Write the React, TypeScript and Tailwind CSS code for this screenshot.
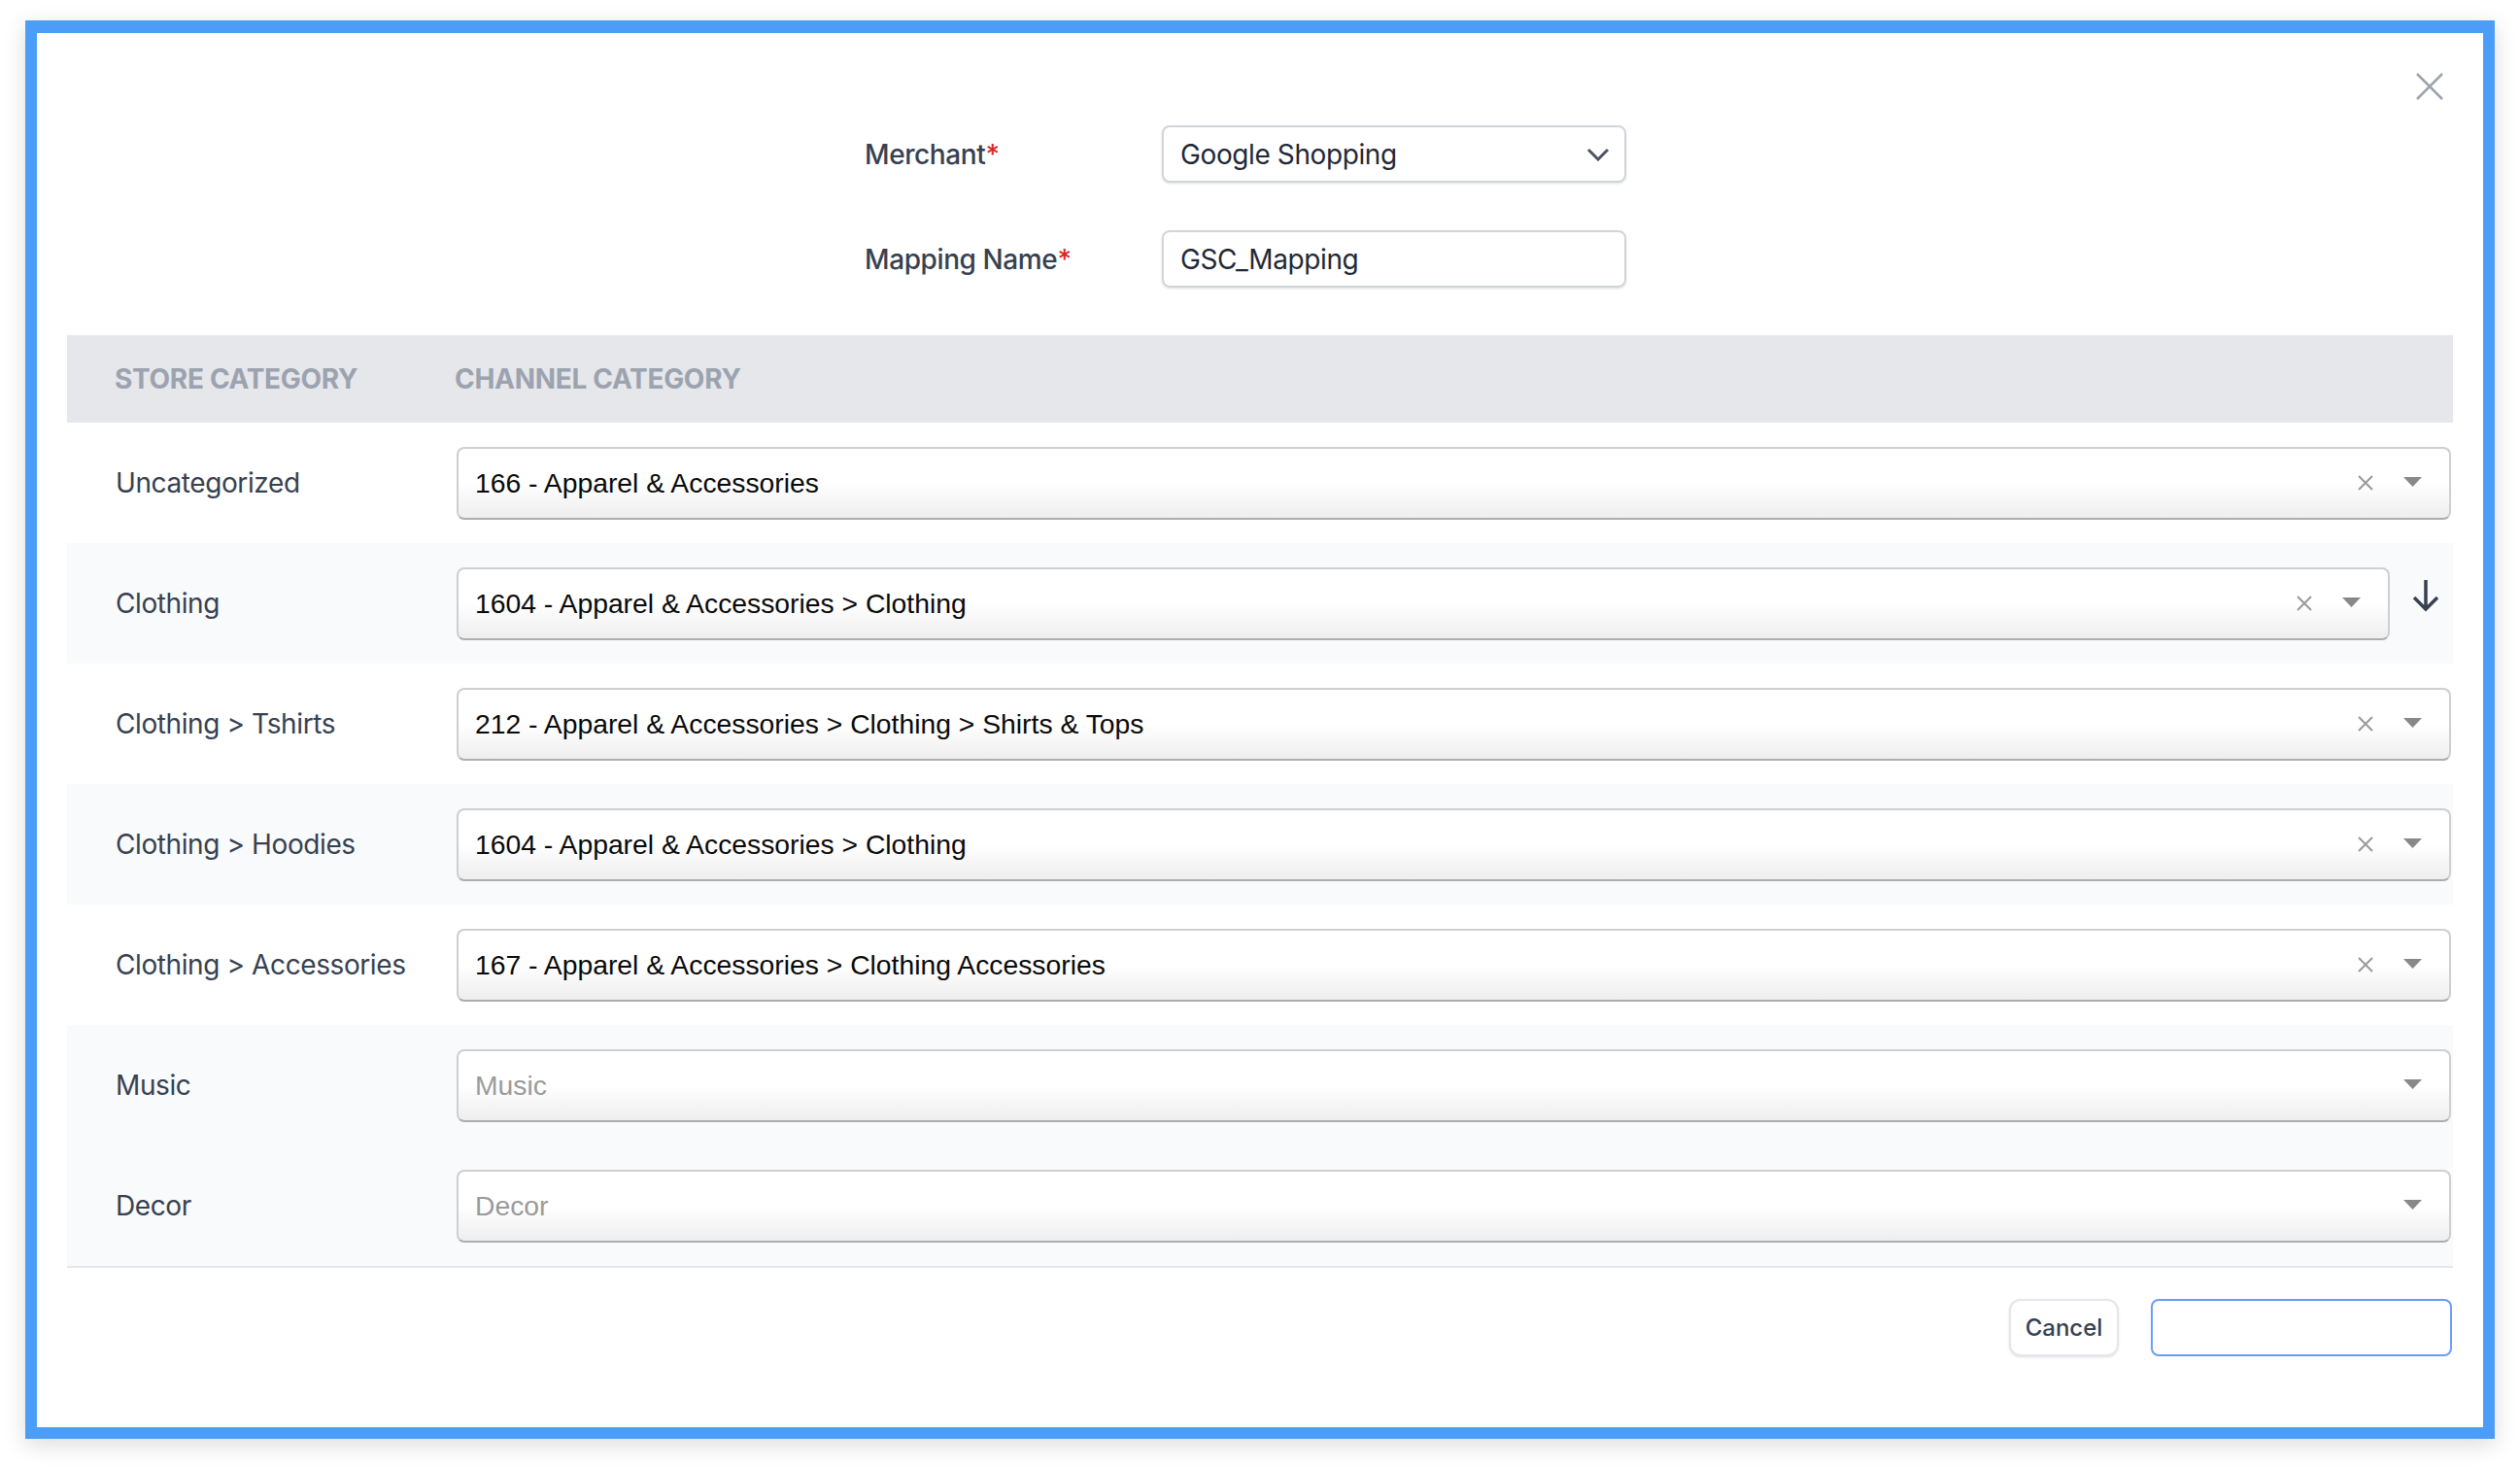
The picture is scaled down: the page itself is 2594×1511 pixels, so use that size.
import React from "react";

type Row = { store: string; channel?: string; placeholder?: string; shaded: boolean; pin?: boolean };

const rows: Row[] = [
  { store: "Uncategorized", channel: "166 - Apparel & Accessories", shaded: false },
  { store: "Clothing", channel: "1604 - Apparel & Accessories > Clothing", shaded: true, pin: true },
  { store: "Clothing > Tshirts", channel: "212 - Apparel & Accessories > Clothing > Shirts & Tops", shaded: false },
  { store: "Clothing > Hoodies", channel: "1604 - Apparel & Accessories > Clothing", shaded: true },
  { store: "Clothing > Accessories", channel: "167 - Apparel & Accessories > Clothing Accessories", shaded: false },
  { store: "Music", placeholder: "Music", shaded: true },
  { store: "Decor", placeholder: "Decor", shaded: true },
];

const ClearIcon = () => (
  <svg width="16" height="16" viewBox="0 0 16 16" className="shrink-0">
    <path d="M1 1L15 15M15 1L1 15" stroke="#999" strokeWidth="2" />
  </svg>
);

const Caret = () => (
  <svg width="19" height="10" viewBox="0 0 19 10" className="shrink-0 -mt-[3px]">
    <polygon points="0,0 19,0 9.5,10" fill="#888" />
  </svg>
);

const ChannelSelect = ({ value, placeholder }: { value?: string; placeholder?: string }) => (
  <div className="flex-1 h-[75px] flex items-center pl-[17px] pr-[28px] rounded-[8px] border-2 border-[#cfcfcf] border-b-[#adadad] bg-gradient-to-b from-white from-50% to-[#eeeeee] font-['Liberation_Sans',Arial,sans-serif] text-[28.3px]">
    {value ? (
      <span className="flex-1 text-[#0a0a0a]">{value}</span>
    ) : (
      <span className="flex-1 text-[#9a9a9a]">{placeholder}</span>
    )}
    {value && (
      <span className="mr-[31px]">
        <ClearIcon />
      </span>
    )}
    <Caret />
  </div>
);

const App = () => {
  return (
    <div className="w-[2594px] h-[1511px] bg-white pl-[26px] pt-[21px] font-['Inter',sans-serif]">
      <div className="relative w-[2542px] h-[1460px] border-[12px] border-t-[13px] border-[#4b9df8] bg-white shadow-[0_6px_22px_rgba(0,0,0,0.14)]">
        <button className="absolute right-[41px] top-[41px]">
          <svg width="28" height="28" viewBox="0 0 28 28">
            <path d="M1 1L27 27M27 1L1 27" stroke="#9ca3af" strokeWidth="2.5" />
          </svg>
        </button>

        <div className="pt-[95px] pl-[852px] flex flex-col gap-[49px]">
          <div className="flex items-center">
            <div className="w-[306px] text-[28px] font-medium tracking-[-0.4px] text-[#374151]">
              Merchant<span className="text-[#dc2626]">*</span>
            </div>
            <div className="w-[478px] h-[59px] flex items-center justify-between pl-[17px] pr-[15px] rounded-[8px] border-2 border-[#d1d5db] shadow-sm text-[28px] tracking-[-0.4px] text-[#1f2937]">
              <span>Google Shopping</span>
              <svg width="24" height="14" viewBox="0 0 24 14">
                <path d="M2 2L12 12L22 2" fill="none" stroke="#4b5563" strokeWidth="3" />
              </svg>
            </div>
          </div>
          <div className="flex items-center">
            <div className="w-[306px] text-[28px] font-medium tracking-[-0.4px] text-[#374151]">
              Mapping Name<span className="text-[#dc2626]">*</span>
            </div>
            <div className="w-[478px] h-[59px] flex items-center pl-[17px] rounded-[8px] border-2 border-[#d1d5db] shadow-sm text-[28px] tracking-[-0.4px] text-[#1f2937]">
              GSC_Mapping
            </div>
          </div>
        </div>

        <div className="mx-[31px] mt-[49px]">
          <div className="h-[90px] flex items-center bg-[#e5e7eb] text-[28px] font-bold uppercase tracking-[-0.3px] text-[#9ca3af]">
            <div className="w-[399px] pl-[49px]">Store Category</div>
            <div>Channel Category</div>
          </div>
          <div className="border-b-2 border-[#e5e7eb]">
            {rows.map((r) => (
              <div
                key={r.store}
                className={`h-[124px] flex items-center ${r.shaded ? "bg-[#f9fafb]" : "bg-white"}`}
              >
                <div className="w-[401px] pl-[50px] text-[28px] tracking-[-0.4px] text-[#374151]">{r.store}</div>
                <div className="flex-1 flex items-center pr-[2px]">
                  <ChannelSelect value={r.channel} placeholder={r.placeholder} />
                  {r.pin && (
                    <div className="w-[63px] pl-[22px] -mt-[16px]">
                      <svg width="30" height="34" viewBox="0 0 30 34">
                        <path d="M15 1V31M3 19L15 31L27 19" fill="none" stroke="#374151" strokeWidth="3.5" />
                      </svg>
                    </div>
                  )}
                </div>
              </div>
            ))}
          </div>
          <div className="flex justify-end items-center gap-[33px] pt-[32px] pr-[1px]">
            <button className="w-[113px] h-[59px] rounded-[12px] border-2 border-[#e5e7eb] bg-white shadow-sm text-[24px] font-medium text-[#374151]">
              Cancel
            </button>
            <button className="w-[310px] h-[59px] rounded-[8px] border-2 border-[#6b9cf6] bg-white" />
          </div>
        </div>
      </div>
    </div>
  );
};

export default App;
